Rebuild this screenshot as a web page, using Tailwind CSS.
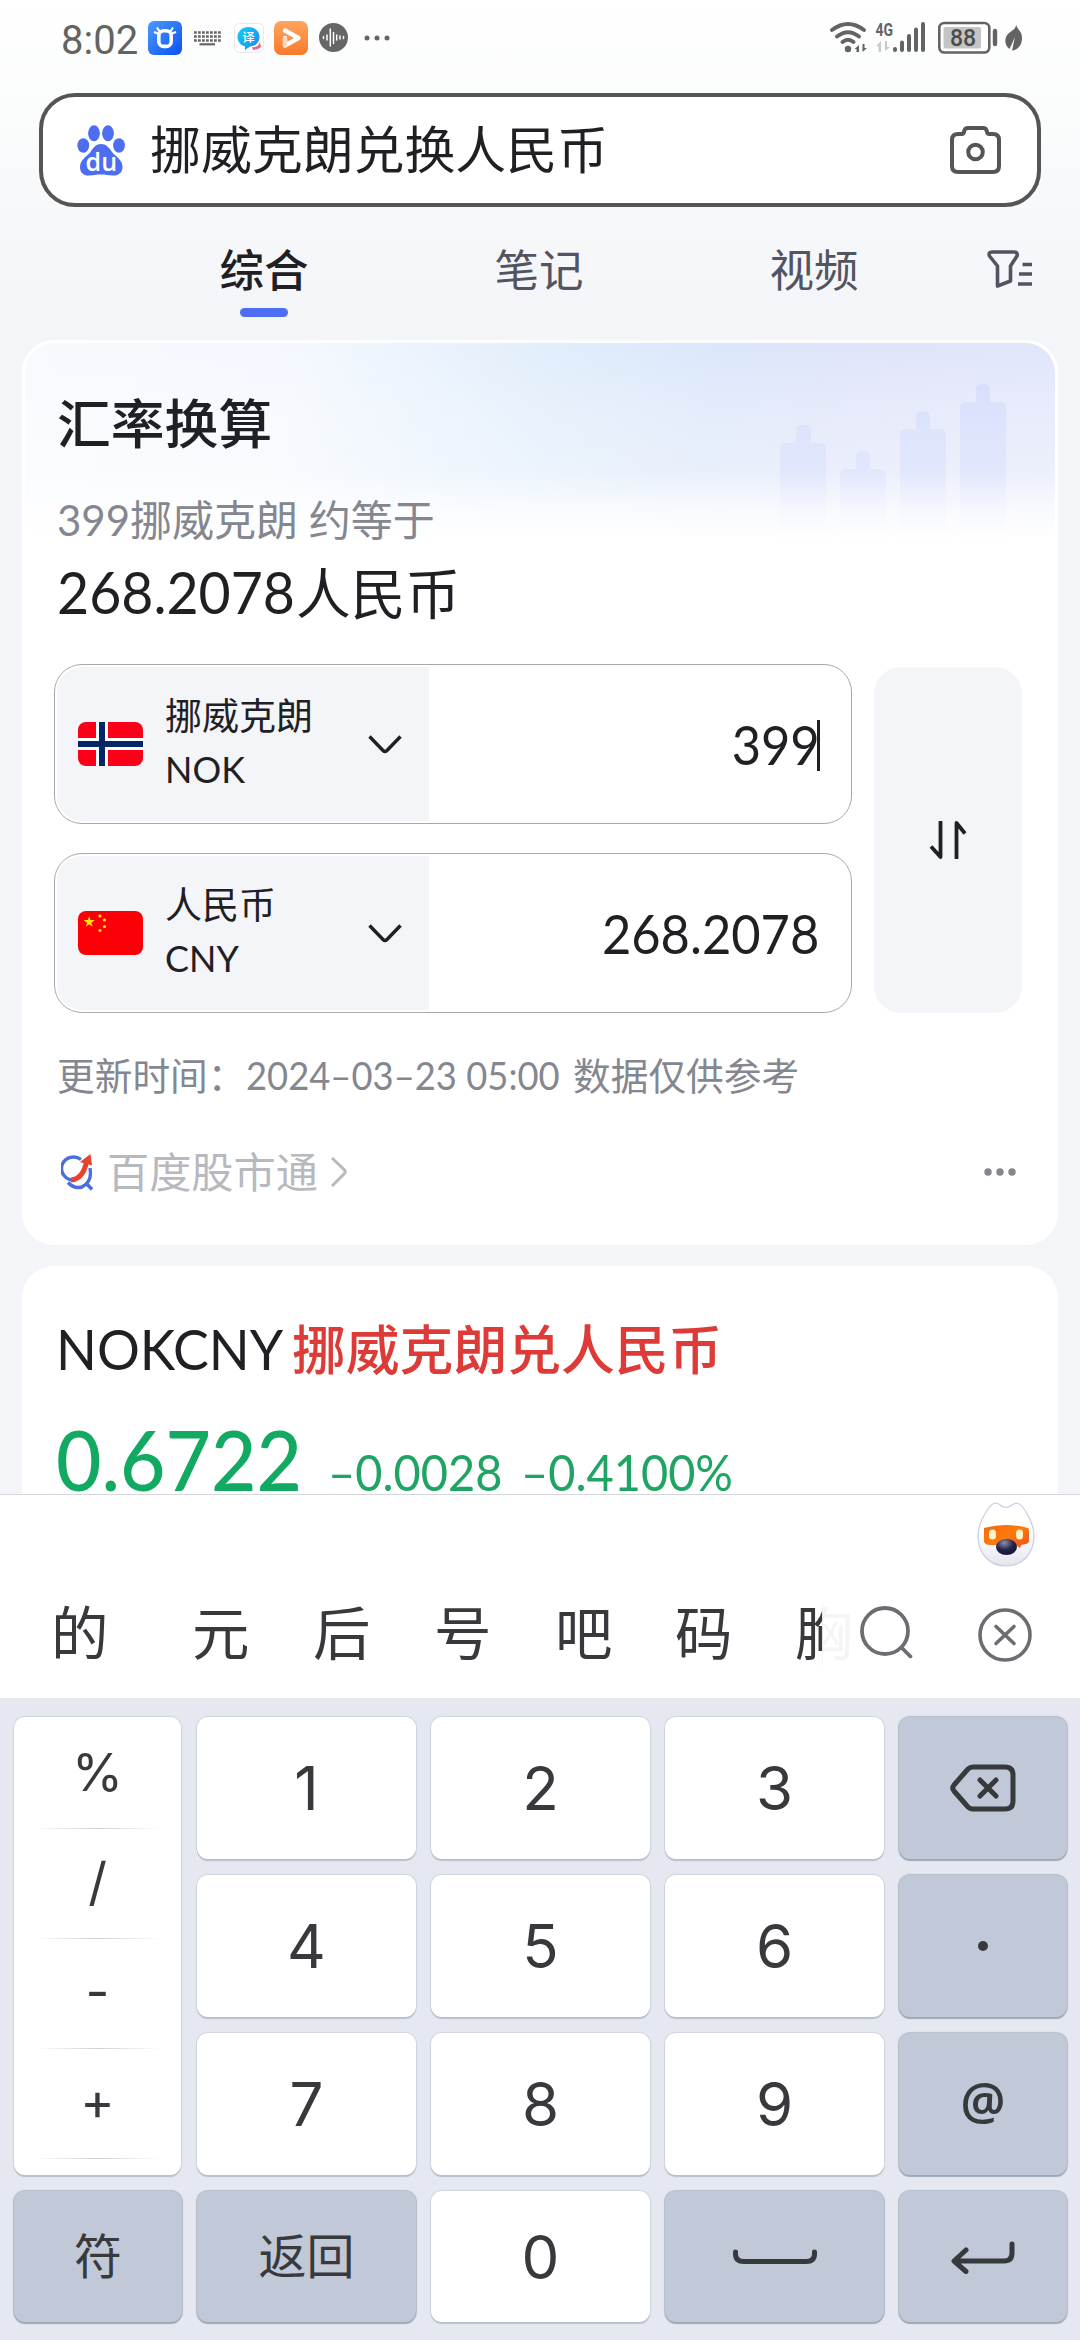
<!DOCTYPE html>
<html lang="zh-CN">
<head>
<meta charset="utf-8">
<title>挪威克朗兑换人民币</title>
<script src="https://cdn.jsdelivr.net/npm/@tailwindcss/browser@4"></script>
</head>
<body class="w-[1080px] h-[2340px] overflow-hidden bg-[#f4f5f9] text-[#1f2024] font-['Lato','Noto_Sans_CJK_SC',sans-serif]">
<div class="flex flex-col w-[1080px] h-[2340px]">

<!-- Results page -->
<main class="h-[1494px] shrink-0 overflow-hidden bg-[linear-gradient(180deg,#ffffff_0px,#fbfcfc_100px,#f7f8fa_220px,#f4f5f9_310px)]">

  <!-- Status bar -->
  <div class="flex items-start h-[93px] pl-[61px]">
    <div class="w-[87px] pt-[17px] text-[40px] leading-[48px] text-[#636363] font-['Roboto',sans-serif]">8:02</div>
    <svg class="mt-[21px]" width="34" height="34" viewBox="0 0 34 34"><defs><linearGradient id="b1" x1="0" y1="0" x2="1" y2="1"><stop offset="0" stop-color="#4d9bff"/><stop offset="1" stop-color="#0a50ee"/></linearGradient></defs><rect width="34" height="34" rx="6" fill="url(#b1)"/><path d="M9 6.500l2.500 4M25 6.500l-2.500 4M6 11l4 1.500M28 11l-4 1.500" stroke="#fff" stroke-width="2.200"/><rect x="10.800" y="9.800" width="12.400" height="15.600" rx="5" fill="none" stroke="#fff" stroke-width="3.600"/></svg>
    <svg class="mt-[31px] ml-[12px]" width="27" height="15" viewBox="0 0 27 15"><path d="M0 1.500H27M0 5.500H27M0 9.500H27" stroke="#666" stroke-width="2.400" stroke-dasharray="2.800 1.200"/><path d="M5.500 13.300H21" stroke="#666" stroke-width="2.200"/></svg>
    <svg class="mt-[23px] ml-[13px]" width="30" height="30" viewBox="0 0 30 30"><defs><linearGradient id="b2" x1="0" y1="0" x2="1" y2="1"><stop offset="0" stop-color="#12d0f5"/><stop offset="1" stop-color="#1a86f5"/></linearGradient></defs><rect x=".5" y=".5" width="29" height="29" rx="5" fill="#fff" stroke="#eaeaea"/><path d="M18 24q6 1 8-5l1 5-3 2-5 1z" fill="#f0628a"/><path d="M14.500 4C21 4 25.500 8.500 25.500 14S21 23.500 16 23.500L11 27V23.500C6 22 3.500 18 3.500 14 3.500 8.500 8 4 14.500 4Z" fill="url(#b2)"/><text x="14.500" y="18.500" font-size="12.500" text-anchor="middle" fill="#fff" font-family="Noto Sans CJK SC" font-weight="500">译</text></svg>
    <svg class="mt-[21px] ml-[10px]" width="34" height="34" viewBox="0 0 34 34"><defs><linearGradient id="b3" x1="0" y1="0" x2="0" y2="1"><stop offset="0" stop-color="#ffa45f"/><stop offset="1" stop-color="#f77a2c"/></linearGradient></defs><rect width="34" height="34" rx="7" fill="url(#b3)"/><path d="M11 9.500L24.500 17 11 24.500V17" fill="none" stroke="#fff" stroke-width="4.400" stroke-linejoin="round" stroke-linecap="round"/><path d="M11 18v6" stroke="#ffd9bd" stroke-width="4.400" stroke-linecap="round"/></svg>
    <svg class="mt-[23px] ml-[11px]" width="29" height="29" viewBox="0 0 29 29"><circle cx="14.500" cy="14.500" r="14.500" fill="#666"/><path d="M4.500 13.500v2M8 12v5M11.300 6v17M14.500 9.500v11M17.700 12v5M21 13v3M24.500 13.500v2" stroke="#fff" stroke-width="1.500" stroke-linecap="round"/></svg>
    <svg class="mt-[35px] ml-[16px]" width="26" height="6" viewBox="0 0 26 6"><g fill="#666"><circle cx="3" cy="3" r="2.500"/><circle cx="13" cy="3" r="2.500"/><circle cx="23" cy="3" r="2.500"/></g></svg>
    <svg class="mt-[20px] ml-[440px]" width="194" height="36" viewBox="830 20 194 36" fill="none">
      <g stroke="#636363" stroke-width="3.800" stroke-linecap="round"><path d="M832 30q16-12 32 0M837 36.500q11-8.500 22 0M842.500 42q5.500-4.500 11 0"/></g>
      <circle cx="848" cy="49" r="3.200" fill="#636363"/>
      <path d="M854.500 49l4.500-4v7h-2.500v-3zM867 48l-4.500 4v-8h2v4z" fill="#636363"/>
      <text x="875.500" y="36" font-size="19" font-weight="700" fill="#636363" font-family="Roboto" textLength="17.500" lengthAdjust="spacingAndGlyphs">4G</text>
      <path d="M876 46l5-5v11h-2.500v-6zM890 47l-5 4v-10h2v6z" fill="#c9c9c9"/>
      <g stroke="#636363" stroke-width="4" stroke-linecap="round"><path d="M895 49v1M902 42.500V50M909 36V50M916 29.500V50M923 24V50"/></g>
      <rect x="939.300" y="23" width="50" height="29.500" rx="5" stroke="#636363" stroke-width="2.600"/>
      <rect x="943.500" y="27" width="37.500" height="21.500" rx="2" fill="#c4c4c4"/>
      <text x="963" y="46" font-size="23" text-anchor="middle" fill="#4c4c4c" font-family="Roboto" font-weight="500">88</text>
      <path d="M995 31v13" stroke="#636363" stroke-width="4.400" stroke-linecap="round"/>
      <path d="M1016 24.500C1018 31 1022 31 1022 38C1022 45 1018 50 1012 50.500L1015 37 1009.500 49C1004 45 1004 37 1009 33C1013 30 1016 28.500 1016 24.500Z" fill="#636363"/>
    </svg>
  </div>

  <!-- Search box -->
  <div class="flex items-center mx-[39px] h-[114px] rounded-[36px] border-4 border-[#555555] bg-white pl-[34px] pr-[36px]">
    <svg width="49" height="51" viewBox="0 0 49 51"><g fill="#4e6ef2"><ellipse cx="17" cy="8.300" rx="5.900" ry="8"/><ellipse cx="31" cy="8.300" rx="5.900" ry="8"/><ellipse cx="6.300" cy="20.500" rx="5.900" ry="7.300"/><ellipse cx="42" cy="20.500" rx="5.900" ry="7.300"/><path d="M24 19c5 0 8 3.500 11 8 3 4 10.500 7.500 10.500 15 0 6-4.500 9-10 8.500-4-.3-7-1-11.500-1s-7.500.7-11.500 1C7 51 3 48 3 42c0-7.500 7.500-11 10.500-15 3-4.500 5.500-8 10.500-8z"/></g><text x="24.300" y="45.500" text-anchor="middle" font-size="25" font-family="Open Sans" font-weight="600" fill="#fff">du</text></svg>
    <div class="ml-[24px] grow text-[50.900px] leading-[80px] whitespace-nowrap">挪威克朗兑换人民币</div>
    <svg width="51" height="48" viewBox="0 0 51 48" fill="none" stroke="#555" stroke-width="4"><path d="M8 8h3.500q2 0 2.500-2l.3-1.200Q15 2 18 2h15q3 0 3.700 2.800l.3 1.200q.5 2 2.500 2H43q6 0 6 6v26q0 6-6 6H8q-6 0-6-6V14q0-6 6-6z"/><circle cx="25.500" cy="26" r="7.300"/></svg>
  </div>

  <!-- Tabs -->
  <div class="flex h-[133px] text-[44.500px] leading-[64px] text-[#525561]">
    <div class="ml-[164px] w-[200px] flex flex-col items-center pt-[31px] font-medium text-[#1f2024]">综合<span class="mt-[6px] h-[9px] w-[48px] rounded-full bg-[#4e6ef2]"></span></div>
    <div class="ml-[75px] w-[200px] text-center pt-[31px]">笔记</div>
    <div class="ml-[75px] w-[200px] text-center pt-[31px]">视频</div>
    <svg class="ml-[73px] mt-[43px]" width="46" height="39" viewBox="0 0 46 39" fill="none" stroke="#525561" stroke-width="3.600" stroke-linejoin="round"><path d="M5 2H27Q31 2 30 6L23.500 16V31L10.500 36V16L2.500 6Q1 2 5 2Z"/><path d="M35.500 14.500H45M32 24H45M31 34H45"/></svg>
  </div>

  <!-- Converter card -->
  <section class="relative mx-[22px] h-[905px] rounded-[32px] bg-white px-[36px] pt-[47px]">
    <div class="absolute left-[3px] right-[3px] top-[3px] h-[197px] overflow-hidden rounded-t-[30px] bg-[linear-gradient(100deg,#f7fafe_0%,#f4f8fe_26%,#e0edfb_50%,#dbe6fa_66%,#e0e4f9_82%,#e0e6fb_100%)]">
      <svg class="absolute left-0 top-0" width="1030" height="197" viewBox="25 343 1030 197" fill="#cfd9fb"><path d="M780 540V449q0-6 6-6h10v-12q0-6 6-6h3q6 0 6 6v12h9q6 0 6 6V540zM840 540V475q0-6 6-6h10v-12q0-6 6-6h2q6 0 6 6v12h10q6 0 6 6V540zM900 540V435q0-6 6-6h10v-12q0-6 6-6h2q6 0 6 6v12h10q6 0 6 6V540zM960 540V408q0-6 6-6h10v-12q0-6 6-6h2q6 0 6 6v12h10q6 0 6 6V540z"/></svg>
      <div class="absolute inset-0 bg-[linear-gradient(180deg,#ffffff00_0%,#ffffff40_35%,#ffffff60_65%,#ffffffc8_84%,#ffffff_100%)]"></div>
    </div>
    <h2 class="relative -ml-px text-[53.800px] leading-[72px] font-medium">汇率换算</h2>
    <div class="relative -ml-px mt-[31px] h-[60px] text-[42px] leading-[60px] text-[#858790] whitespace-pre">399挪威克朗 约等于</div>
    <div class="relative -ml-px mt-[7px] flex h-[70px] items-baseline text-[54.800px] leading-[70px] whitespace-nowrap"><span class="w-[239px] origin-left scale-x-[.955] text-[58px]">268.2078</span><span>人民币</span></div>

    <div class="relative mt-[37px] -ml-[4px] flex">
      <div class="flex flex-col gap-[29px] w-[799px]">
        <div class="flex h-[160px] rounded-[28px] border-[1.500px] border-[#a9a9ab] p-[2px]">
          <div class="flex items-center w-[372px] rounded-l-[25px] bg-[#f4f5f9] pl-[21px]">
            <svg width="65" height="44" viewBox="0 0 65 44"><defs><clipPath id="f"><rect width="65" height="44" rx="8"/></clipPath></defs><g clip-path="url(#f)"><path fill="#fb0019" d="M0 0h65v44H0z"/><path d="M24 0v44M0 22h65" stroke="#fff" stroke-width="12"/><path d="M24 0v44M0 22h65" stroke="#002868" stroke-width="6"/></g></svg>
            <div class="ml-[22px] w-[203px] text-[37px] leading-[54px] -mt-[4px]"><div>挪威克朗</div><div class="-mt-px origin-left scale-x-[.97]">NOK</div></div>
            <svg width="34" height="20" viewBox="0 0 34 20" fill="none" stroke="#1f2024" stroke-width="3.400"><path d="M1.500 2.500L15 16.500Q17 18.500 19 16.500L32.500 2.500"/></svg>
          </div>
          <div class="flex grow items-center justify-end pr-[29px] text-[55px]"><span class="origin-right scale-x-[.92]">399</span><span class="-ml-[3px] w-[3px] h-[51px] bg-[#1f2024] mt-[2px]"></span></div>
        </div>
        <div class="flex h-[160px] rounded-[28px] border-[1.500px] border-[#a9a9ab] p-[2px]">
          <div class="flex items-center w-[372px] rounded-l-[25px] bg-[#f4f5f9] pl-[21px]">
            <svg width="65" height="44" viewBox="0 0 65 44"><rect width="65" height="44" rx="8" fill="#fc0008"/><g fill="#ffea00"><path d="M11.200 5l1.300 4.100h4.300l-3.500 2.600 1.300 4.100-3.400-2.500-3.400 2.500 1.300-4.100L5.600 9.100h4.300z"/><circle cx="22" cy="5" r="1.600"/><circle cx="26.500" cy="9" r="1.600"/><circle cx="26.500" cy="15.500" r="1.600"/><circle cx="22" cy="19.500" r="1.600"/></g></svg>
            <div class="ml-[22px] w-[203px] text-[37px] leading-[54px] -mt-[4px]"><div>人民币</div><div class="-mt-px origin-left scale-x-[.97]">CNY</div></div>
            <svg width="34" height="20" viewBox="0 0 34 20" fill="none" stroke="#1f2024" stroke-width="3.400"><path d="M1.500 2.500L15 16.500Q17 18.500 19 16.500L32.500 2.500"/></svg>
          </div>
          <div class="flex grow items-center justify-end pr-[30px] text-[55px]"><span class="origin-right scale-x-[.92]">268.2078</span></div>
        </div>
      </div>
      <div class="ml-[22px] mt-[3px] flex h-[346px] w-[148px] items-center justify-center rounded-[27px] bg-[#f4f5f9]">
        <svg width="38" height="40" viewBox="0 0 38 40" fill="none" stroke="#1f2024" stroke-width="3.800" stroke-linejoin="round"><path d="M11.500 1V37L2 26.500M27.500 39V3L36 13.500"/></svg>
      </div>
    </div>

    <div class="-ml-px mt-[38px] h-[50px] text-[37.700px] leading-[50px] text-[#858790] whitespace-nowrap flex"><span class="w-[189px]">更新时间：</span><span class="w-[327px] origin-left scale-x-[.965]">2024–03–23 05:00</span><span>数据仅供参考</span></div>

    <div class="mt-[41px] flex h-[60px] items-center">
      <svg class="ml-[3px]" width="33" height="38" viewBox="0 0 33 38" fill="none"><path d="M20 6.500A12 11.500 0 1 0 12 27" stroke="#4a6ee0" stroke-width="3.400"/><path d="M29 15q2 11-4 16M7 29.500q6 6.500 14 4.500l6-4M25 30l6 6.500" stroke="#4a6ee0" stroke-width="3.400"/><path d="M10 27Q22 26 25.500 9" stroke="#e8412c" stroke-width="5"/><path d="M29.500 1L31 12.500 19 9z" fill="#e8412c"/></svg>
      <div class="ml-[13px] text-[42.200px] leading-[60px] text-[#b8b8bf] -mt-px">百度股市通</div>
      <svg class="ml-[11px]" width="20" height="32" viewBox="0 0 20 32" fill="none" stroke="#b8b8bf" stroke-width="3"><path d="M3 2L15.500 14Q17 16 15.500 17.500L3 30"/></svg>
      <svg class="ml-auto mr-[5px]" width="34" height="10" viewBox="0 0 34 10" fill="#858790"><circle cx="5" cy="5" r="3.700"/><circle cx="17" cy="5" r="3.700"/><circle cx="29" cy="5" r="3.700"/></svg>
    </div>
  </section>

  <!-- Quote card -->
  <section class="mx-[22px] mt-[21px] h-[400px] rounded-[32px] bg-white px-[36px] pt-[46px]">
    <h2 class="-ml-[2px] flex h-[72px] items-baseline text-[53.800px] leading-[72px] whitespace-nowrap"><span class="w-[236px] origin-left scale-x-[.94] text-[57px]">NOKCNY</span><span class="font-medium text-[#dd3b38]">挪威克朗兑人民币</span></h2>
    <div class="-ml-[2px] mt-[33px] flex items-baseline whitespace-nowrap text-[51px] leading-[84px] text-[#1fa463]"><span class="w-[272px] origin-left scale-x-[.945] text-[83px] font-medium text-[#12aa62]">0.6722</span><span class="w-[193px] origin-left scale-x-[.92]">–0.0028</span><span class="origin-left scale-x-[.92]">–0.4100%</span></div>
  </section>
</main>

<!-- Candidate bar -->
<div class="flex h-[204px] shrink-0 flex-col border-t border-[#d4d7da] bg-white">
  <div class="flex h-[93px] justify-end pr-[40px]">
    <svg class="mt-[4px]" width="68" height="76" viewBox="0 0 68 76"><defs><linearGradient id="h" x1="0" y1="0" x2="0" y2="1"><stop offset=".5" stop-color="#fff"/><stop offset="1" stop-color="#e2e5ee"/></linearGradient><linearGradient id="o" x1="0" y1="0" x2="1" y2="1"><stop offset="0" stop-color="#f26a10"/><stop offset=".5" stop-color="#ff7a0a"/><stop offset="1" stop-color="#e85020"/></linearGradient><radialGradient id="n" cx=".4" cy=".25" r=".7"><stop offset="0" stop-color="#8b8fb0"/><stop offset=".6" stop-color="#23254a"/><stop offset="1" stop-color="#15163a"/></radialGradient></defs><path d="M34 8.500C39 8.500 40 4 45 4c5 1 17 18 17 33 0 18-12 30-28 30S6 55 6 37C6 22 18 5 23 4c5 0 6 4.500 11 4.500z" fill="url(#h)" stroke="#c9cce0" stroke-width="1.200"/><path d="M12 29q22-6 44 0 1 .5 1 3v10q0 2-3 3l-5 1-1 3-4-3H17q-5-1-5-4z" fill="url(#o)"/><rect x="17" y="30.500" width="7" height="10" rx="3.500" fill="#fff3c8"/><rect x="44" y="30.500" width="7" height="10" rx="3.500" fill="#fff3c8"/><ellipse cx="34.500" cy="48" rx="10.500" ry="8" fill="url(#n)"/></svg>
  </div>
  <div class="relative flex h-[90px] items-center text-[57.500px] leading-[90px] text-[#38393d]">
    <div class="flex w-[822px] overflow-hidden pl-[51px] whitespace-nowrap"><span class="w-[141px] shrink-0">的</span><span class="w-[121px] shrink-0">元</span><span class="w-[121px] shrink-0">后</span><span class="w-[121px] shrink-0">号</span><span class="w-[120px] shrink-0">吧</span><span class="w-[120px] shrink-0">码</span><span class="shrink-0">胸</span></div>
    <div class="absolute left-[822px] top-[10px] h-[72px] w-px bg-gradient-to-b from-transparent via-[#dcdde0] to-transparent"></div>
    <div class="w-[38px] overflow-hidden text-[#38393d]/5"><div class="-ml-[27px] w-[58px]">胸</div></div>
    <svg width="54" height="54" viewBox="0 0 54 54" fill="none" stroke="#6b6d72" stroke-width="3.800" stroke-linecap="round"><circle cx="25" cy="25" r="23"/><path d="M42 42l8.500 8.500"/></svg>
    <svg class="ml-[64px] mt-[4px]" width="54" height="54" viewBox="0 0 54 54" fill="none" stroke="#6b6d72" stroke-width="3.600" stroke-linecap="round"><circle cx="27" cy="27" r="25"/><path d="M18 18.500l18 17M36 18.500l-18 17"/></svg>
  </div>
</div>

<!-- Numeric keypad -->
<div class="grid h-[642px] shrink-0 grid-cols-[168px_219px_219px_219px_168px] grid-rows-[142px_142px_142px_131px] gap-x-[15px] gap-y-[16px] bg-[#e5e8f0] pl-[14px] pt-[19px] text-[60px] text-[#38393d] font-['Inter','Noto_Sans_CJK_SC',sans-serif]">
  <div class="row-span-3 mr-px flex flex-col items-center rounded-[11px] bg-white text-[52px] leading-[106px] shadow-[0_2px_1px_#b9bfcb,0_0_1px_1px_#cfd4de]">
    <div class="h-[111px] leading-[112px]">%</div><div class="h-px w-[126px] bg-gradient-to-r from-transparent via-[#ccd0d6] to-transparent"></div>
    <div class="h-[109px]">/</div><div class="h-px w-[126px] bg-gradient-to-r from-transparent via-[#ccd0d6] to-transparent"></div>
    <div class="h-[109px]">-</div><div class="h-px w-[126px] bg-gradient-to-r from-transparent via-[#ccd0d6] to-transparent"></div>
    <div class="h-[109px]">+</div><div class="h-px w-[126px] bg-gradient-to-r from-transparent via-[#ccd0d6] to-transparent"></div>
  </div>
  <div class="flex items-center justify-center rounded-[11px] bg-white shadow-[0_2px_1px_#b9bfcb,0_0_1px_1px_#cfd4de]">1</div>
  <div class="flex items-center justify-center rounded-[11px] bg-white shadow-[0_2px_1px_#b9bfcb,0_0_1px_1px_#cfd4de]">2</div>
  <div class="flex items-center justify-center rounded-[11px] bg-white shadow-[0_2px_1px_#b9bfcb,0_0_1px_1px_#cfd4de]">3</div>
  <div class="flex items-center justify-center rounded-[11px] bg-[#c1c8d7] shadow-[0_2px_1px_#9fa8b6,0_0_1px_1px_#b4bcca]"><svg width="66" height="48" viewBox="0 0 66 48" fill="none" stroke="#38393d" stroke-width="5" stroke-linecap="round" stroke-linejoin="round"><path d="M23 3H55Q63 3 63 11V37Q63 45 55 45H23Q20 45 18 43L4 27Q1.500 24 4 21L18 5Q20 3 23 3Z"/><path d="M30 16l16 16M46 16l-16 16"/></svg></div>

  <div class="flex items-center justify-center rounded-[11px] bg-white shadow-[0_2px_1px_#b9bfcb,0_0_1px_1px_#cfd4de]">4</div>
  <div class="flex items-center justify-center rounded-[11px] bg-white shadow-[0_2px_1px_#b9bfcb,0_0_1px_1px_#cfd4de]">5</div>
  <div class="flex items-center justify-center rounded-[11px] bg-white shadow-[0_2px_1px_#b9bfcb,0_0_1px_1px_#cfd4de]">6</div>
  <div class="flex items-center justify-center rounded-[11px] bg-[#c1c8d7] shadow-[0_2px_1px_#9fa8b6,0_0_1px_1px_#b4bcca]"><span class="h-[10px] w-[10px] rounded-full bg-[#38393d]"></span></div>

  <div class="flex items-center justify-center rounded-[11px] bg-white shadow-[0_2px_1px_#b9bfcb,0_0_1px_1px_#cfd4de]">7</div>
  <div class="flex items-center justify-center rounded-[11px] bg-white shadow-[0_2px_1px_#b9bfcb,0_0_1px_1px_#cfd4de]">8</div>
  <div class="flex items-center justify-center rounded-[11px] bg-white shadow-[0_2px_1px_#b9bfcb,0_0_1px_1px_#cfd4de]">9</div>
  <div class="flex items-center justify-center rounded-[11px] bg-[#c1c8d7] shadow-[0_2px_1px_#9fa8b6,0_0_1px_1px_#b4bcca] font-['Noto_Sans',sans-serif] font-semibold text-[50px] pb-[8px]">@</div>

  <div class="flex items-center justify-center rounded-[11px] bg-[#c1c8d7] shadow-[0_2px_1px_#9fa8b6,0_0_1px_1px_#b4bcca] text-[48px]">符</div>
  <div class="flex items-center justify-center rounded-[11px] bg-[#c1c8d7] shadow-[0_2px_1px_#9fa8b6,0_0_1px_1px_#b4bcca] text-[48px]">返回</div>
  <div class="flex items-center justify-center rounded-[11px] bg-white shadow-[0_2px_1px_#b9bfcb,0_0_1px_1px_#cfd4de]">0</div>
  <div class="flex items-center justify-center rounded-[11px] bg-[#c1c8d7] shadow-[0_2px_1px_#9fa8b6,0_0_1px_1px_#b4bcca]"><svg width="84" height="16" viewBox="0 0 84 16" fill="none" stroke="#38393d" stroke-width="5" stroke-linecap="round"><path d="M2.500 3v2Q2.500 12.500 11 12.500H73Q81.500 12.500 81.500 5V3"/></svg></div>
  <div class="flex items-center justify-center rounded-[11px] bg-[#c1c8d7] shadow-[0_2px_1px_#9fa8b6,0_0_1px_1px_#b4bcca]"><svg width="64" height="34" viewBox="0 0 64 34" fill="none" stroke="#38393d" stroke-width="5" stroke-linecap="round" stroke-linejoin="round"><path d="M61 4V13Q61 21 53 21H4M15 10L3 21 15 31.500"/></svg></div>
</div>

</div>
</body>
</html>
